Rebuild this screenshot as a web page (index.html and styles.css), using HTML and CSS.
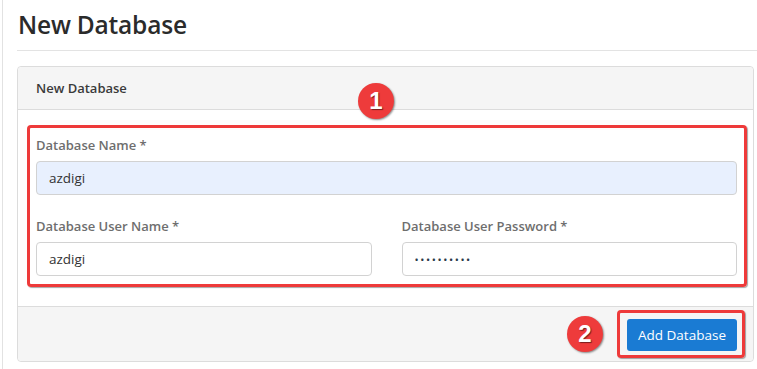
FILE: index.html
```html
<!DOCTYPE html>
<html lang="en">
<head>
    <meta charset="UTF-8">
    <meta name="viewport" content="width=device-width, initial-scale=1.0">
    <title>New Database</title>
    <link rel="stylesheet" href="styles.css">
</head>
<body>
    <div class="page">
        <h1>New Database</h1>
        <hr>

        <div class="panel">
            <div class="panel-heading">New Database</div>

            <div class="panel-body">
                <div class="mark-box">
                    <div class="form-group">
                        <label for="dbName">Database Name *</label>
                        <input type="text" id="dbName" class="autofill" value="azdigi">
                    </div>
                    <div class="form-row">
                        <div class="form-group">
                            <label for="dbUser">Database User Name *</label>
                            <input type="text" id="dbUser" value="azdigi">
                        </div>
                        <div class="form-group">
                            <label for="dbPass">Database User Password *</label>
                            <input type="password" id="dbPass" value="azdigi1234">
                        </div>
                    </div>
                </div>
            </div>

            <div class="panel-footer">
                <span class="step step-two">2</span>
                <span class="mark-btn">
                    <button type="button">Add Database</button>
                </span>
            </div>

            <span class="step step-one">1</span>
        </div>
    </div>
</body>
</html>
```

FILE: styles.css
```css
* { box-sizing: border-box; }
html, body { margin: 0; background: #fff; }
body { font-family: "Open Sans", "Noto Sans", sans-serif; color: #333; width: 757px; height: 369px; overflow: hidden; }
.page { border-left: 1px solid #e2e2e2; margin-left: 2px; padding: 0 0 0 14px; height: 369px; }
h1 { font-size: 24.5px; font-weight: 600; color: #2b2b2b; margin: 0; padding: 9px 0 0 1px; line-height: 32px; letter-spacing: -0.2px; }
hr { border: 0; border-top: 1px solid #e3e3e3; margin: 9px 0 15px; }
.panel { position: relative; border: 1px solid #dcdcdc; border-radius: 4px; margin-right: 3px; background: #fff; }
.panel-heading { background: #f5f5f5; border-bottom: 1px solid #dcdcdc; height: 43px; line-height: 42px; padding-left: 18px; font-size: 13px; font-weight: 600; color: #3a3a3a; border-radius: 4px 4px 0 0; }
.panel-body { padding: 15px 6px 19px 9px; }
.mark-box { border: 3px solid #ee3a3a; border-radius: 4px; padding: 7px 7px 8px 6px; box-shadow: 1px 1px 1px rgba(0,0,0,0.35); }
.form-group { display: flex; flex-direction: column; }
.form-row { display: grid; grid-template-columns: 1fr 1fr; gap: 30px; margin-top: 21px; }
label { font-size: 13px; font-weight: 600; color: #6e6e6e; line-height: 20px; margin-bottom: 6px; }
input { height: 34px; border: 1px solid #d2d2d2; border-radius: 4px; padding: 0 12px; font-family: inherit; font-size: 13.5px; color: #333; background: #fff; }
input.autofill { background: #e8f0fe; }
input[type="password"] { font-size: 11px; letter-spacing: 1.6px; color: #2a3a4a; }
.panel-footer { display: flex; align-items: center; justify-content: flex-end; gap: 14px; background: #f5f5f5; border-top: 1px solid #dcdcdc; height: 55px; padding-right: 8px; border-radius: 0 0 4px 4px; }
.mark-btn { display: inline-flex; border: 3px solid #ee3a3a; border-radius: 4px; padding: 6px 5px 4px 7px; box-shadow: 1px 1px 1px rgba(0,0,0,0.35); }
button { font-family: inherit; font-size: 13.5px; color: #fff; background: #1a7bd3; border: none; border-radius: 3px; height: 32px; width: 110px; padding: 0; cursor: pointer; }
.step { display: inline-flex; align-items: center; justify-content: center; width: 36px; height: 36px; border-radius: 50%; background: #ee3b3b; color: #fff; font-family: "Liberation Sans", Arial, sans-serif; font-weight: bold; font-size: 24px; box-shadow: 1px 1px 2px rgba(0,0,0,0.45); text-shadow: 1px 1px 1px rgba(0,0,0,0.5); }
.step-one { position: absolute; left: 340px; top: 16px; }
```
